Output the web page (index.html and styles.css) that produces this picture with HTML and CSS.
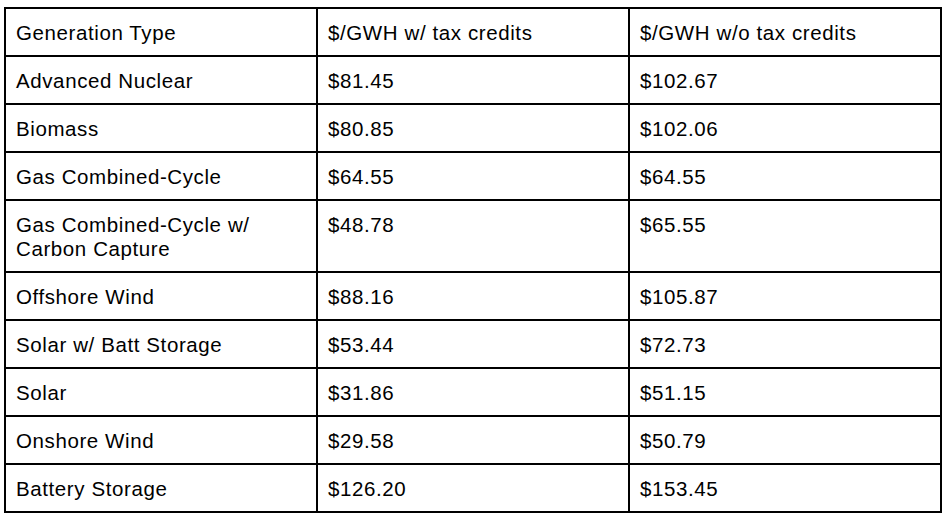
FILE: index.html
```html
<!DOCTYPE html>
<html>
<head>
<meta charset="utf-8">
<link rel="stylesheet" href="styles.css">
</head>
<body>
<table class="cost-table">
  <colgroup><col class="c"><col class="c"><col class="c"></colgroup>
  <tbody>
    <tr><td>Generation Type</td><td>$/GWH w/ tax credits</td><td>$/GWH w/o tax credits</td></tr>
    <tr><td>Advanced Nuclear</td><td>$81.45</td><td>$102.67</td></tr>
    <tr><td>Biomass</td><td>$80.85</td><td>$102.06</td></tr>
    <tr><td>Gas Combined-Cycle</td><td>$64.55</td><td>$64.55</td></tr>
    <tr><td>Gas Combined-Cycle w/<br>Carbon Capture</td><td>$48.78</td><td>$65.55</td></tr>
    <tr><td>Offshore Wind</td><td>$88.16</td><td>$105.87</td></tr>
    <tr><td>Solar w/ Batt Storage</td><td>$53.44</td><td>$72.73</td></tr>
    <tr><td>Solar</td><td>$31.86</td><td>$51.15</td></tr>
    <tr><td>Onshore Wind</td><td>$29.58</td><td>$50.79</td></tr>
    <tr><td>Battery Storage</td><td>$126.20</td><td>$153.45</td></tr>
  </tbody>
</table>
</body>
</html>
```
FILE: styles.css
```css
html, body {
  margin: 0;
  padding: 0;
  background: #fff;
}
body {
  padding: 7px 0 0 4px;
}
.cost-table {
  border-collapse: collapse;
  table-layout: fixed;
  width: 938px;
  font-family: "Liberation Sans", Arial, sans-serif;
  font-size: 20.5px;
  letter-spacing: 0.6px;
  color: #000;
}
.cost-table .c {
  width: 312px;
}
.cost-table td {
  border: 2px solid #000;
  padding: 12px 10px 10px 10px;
  line-height: 24px;
  vertical-align: top;
  text-align: left;
}
```
